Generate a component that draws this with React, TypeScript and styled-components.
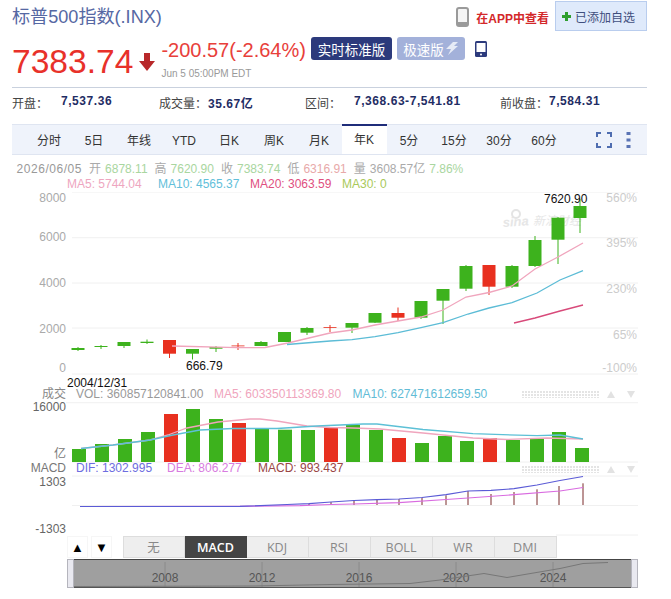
import styled, { createGlobalStyle } from "styled-components";

const GlobalStyle = createGlobalStyle`
  body {
    margin: 0;
    background: #fff;
    font-family: "Liberation Sans", "Noto Sans CJK SC", sans-serif;
  }
`;

const Page = styled.div`
  width: 671px;
  height: 599px;
  overflow: hidden;
  background: #fff;
`;

const TitleRow = styled.div`
  display: flex;
  align-items: flex-start;
  height: 36px;
  padding-left: 12px;
  width: 635px;
`;

const Title = styled.div`
  font-size: 18.1px;
  line-height: 22px;
  margin-top: 6px;
  color: #5668a3;
  flex: 1;
`;

const AppLink = styled.div`
  display: flex;
  align-items: center;
  gap: 7px;
  height: 20px;
  margin-top: 7px;
  margin-right: 6px;
  font-size: 12px;
  font-weight: bold;
  color: #d3282a;
`;

const WatchButton = styled.div`
  display: flex;
  align-items: center;
  gap: 4px;
  box-sizing: border-box;
  width: 92px;
  height: 30px;
  margin-top: 1px;
  padding-left: 6px;
  background: #dfeafb;
  border: 1px solid #b9cdee;
  font-size: 12px;
  color: #3f4f7e;
`;

const QuoteRow = styled.div`
  display: flex;
  height: 51px;
  padding-left: 12px;
  width: 635px;
  box-sizing: content-box;
`;

const Price = styled.div`
  font-size: 33.6px;
  line-height: 52px;
  color: #e8312a;
`;

const DownArrow = styled.svg`
  width: 18px;
  height: 18px;
  margin: 17px 5px 0 5px;
`;

const ChangeBlock = styled.div`
  display: flex;
  flex-direction: column;
`;

const Change = styled.div`
  font-size: 20px;
  line-height: 26px;
  margin-top: 1px;
  color: #e8403a;
  white-space: nowrap;
`;

const Stamp = styled.div`
  font-size: 10px;
  line-height: 12px;
  margin-top: 5px;
  color: #999;
  white-space: nowrap;
`;

const Badge = styled.div<{ $w: number; $bg: string }>`
  display: flex;
  align-items: center;
  justify-content: center;
  gap: 1px;
  box-sizing: border-box;
  width: ${(p) => p.$w}px;
  height: 23px;
  margin: 1px 0 0 5px;
  background: ${(p) => p.$bg};
  border-radius: 3px;
  font-size: 13.5px;
  color: #fff;
`;

const DeviceLink = styled.div`
  margin: 5px 0 0 10px;
`;

const StatsRow = styled.div`
  display: flex;
  align-items: center;
  margin-left: 12px;
  width: 635px;
  height: 28px;
  border-top: 1px solid #c9d1de;
  font-size: 12px;
`;

const Stat = styled.div<{ $w: number }>`
  display: flex;
  width: ${(p) => p.$w}px;
  color: #444;
`;

const StatLabel = styled.span`
  width: 49px;
`;

const StatValue = styled.span`
  font-weight: bold;
  color: #1f2d64;
  letter-spacing: 0.55px;
`;

const TabBar = styled.div`
  display: flex;
  box-sizing: border-box;
  margin: 8px 0 0 12px;
  padding-left: 14.5px;
  width: 635px;
  height: 31px;
  background: #eff3fb;
  border-top: 1px solid #dfe5f1;
  border-bottom: 1px solid #dfe5f1;
`;

const Tab = styled.div<{ $active?: boolean }>`
  box-sizing: border-box;
  width: 45px;
  height: 30px;
  margin-top: -1px;
  text-align: center;
  font-size: 12px;
  line-height: 31px;
  color: #333;
  background: ${(p) => (p.$active ? "#fff" : "transparent")};
  border-top: 2px solid ${(p) => (p.$active ? "#1f2d7a" : "transparent")};
  ${(p) => (p.$active ? "line-height: 29px;" : "")}
`;

const TabTools = styled.div`
  display: flex;
  align-items: center;
  gap: 14px;
  margin-left: 29px;
`;

const LegendRow = styled.div<{ $left: number; $top: number }>`
  display: flex;
  height: 15px;
  line-height: 15px;
  font-size: 12px;
  white-space: nowrap;
  margin: ${(p) => p.$top}px 0 0 ${(p) => p.$left}px;
`;

const Pair = styled.span`
  display: inline-flex;
  gap: 4px;
  margin-right: 7px;
`;

const Ink = styled.span<{ $c: string; $ls?: number }>`
  color: ${(p) => p.$c};
  letter-spacing: ${(p) => p.$ls ?? 0}px;
`;

const MaItem = styled.span<{ $c: string; $w: number }>`
  color: ${(p) => p.$c};
  width: ${(p) => p.$w}px;
`;

const ChartSvg = styled.svg`
  display: block;
  width: 671px;
  height: 344px;
  font-family: "Liberation Sans", "Noto Sans CJK SC", sans-serif;
  font-size: 12px;
`;

const IndicatorRow = styled.div`
  display: flex;
  height: 22px;
  margin-left: 67px;
`;

const ArrowButton = styled.div`
  display: flex;
  align-items: center;
  justify-content: center;
  width: 21px;
  margin-right: 3px;
  font-size: 13px;
  color: #000;
  background: #fff;
  border: 1px solid #f6f6f6;
  box-sizing: border-box;
`;

const IndicatorTabs = styled.div`
  display: flex;
  margin-left: 7.5px;
`;

const IndicatorTab = styled.div<{ $active?: boolean }>`
  box-sizing: border-box;
  width: 62px;
  height: 22px;
  line-height: 22px;
  text-align: center;
  font-family: "Open Sans", "Noto Sans CJK SC", sans-serif;
  font-size: 12.5px;
  font-weight: ${(p) => (p.$active ? 600 : 400)};
  color: ${(p) => (p.$active ? "#fff" : "#888")};
  background: ${(p) => (p.$active ? "#444" : "#eee")};
  border: 1px solid ${(p) => (p.$active ? "#444" : "#ddd")};
  border-left-width: ${(p) => (p.$active ? 1 : 0)}px;
  &:first-child {
    border-left-width: 1px;
  }
`;

const Navigator = styled.div`
  display: flex;
  box-sizing: border-box;
  width: 571px;
  height: 29px;
  margin: 1px 0 0 67px;
  background: #9f9f9f;
  border-top: 1px solid #444;
  border-bottom: 1px solid #555;
`;

const NavHandle = styled.div`
  box-sizing: border-box;
  width: 7px;
  margin: -1px 0;
  background: #e9e9f0;
  border: 1px solid #b5b5bd;
`;

const NavTrack = styled.svg`
  flex: 1;
  height: 27px;
  font-family: "Liberation Sans", sans-serif;
  font-size: 12px;
`;

type Candle = [number, number, number, number, number, "g" | "r"];

const candles: Candle[] = [
  [78, 346, 350, 347, 349, "g"],
  [101, 344, 348, 345, 346, "g"],
  [124, 341, 347, 341, 345, "g"],
  [147, 338.5, 343, 340.7, 342, "g"],
  [169.5, 339, 357, 339, 352.7, "r"],
  [192.5, 348, 358.5, 348, 352.7, "g"],
  [216, 345, 351, 346, 347.7, "g"],
  [238, 342, 349, 344.5, 345.2, "r"],
  [261, 340, 345, 341, 345, "g"],
  [284.5, 331, 341, 331, 341, "g"],
  [307, 326, 334, 327, 331.7, "g"],
  [330, 324, 331, 326, 326.8, "r"],
  [352, 322, 332, 322, 326.7, "g"],
  [375, 312, 322, 312, 321.7, "g"],
  [398, 306.5, 320, 312, 316.7, "r"],
  [421, 300, 318, 300, 316.7, "g"],
  [443, 288, 323, 288, 299.7, "g"],
  [466, 264, 290, 265, 287.7, "g"],
  [489, 264, 294, 264, 285.7, "r"],
  [512, 264, 287, 265, 285.7, "g"],
  [535, 235, 266, 239, 265, "g"],
  [558, 216, 263, 216.7, 238.7, "g"],
  [580, 198, 232, 205, 217, "g"],
];

const volumes: [number, number, "g" | "r"][] = [
  [79, 448, "g"], [102, 443, "g"], [125, 438, "g"], [148, 431, "g"],
  [171, 413, "r"], [193, 408, "g"], [216, 418, "g"], [239, 422, "r"],
  [262, 427.3, "g"], [285, 428.7, "g"], [308, 429, "g"], [331, 427, "r"],
  [353, 424, "g"], [376, 429, "g"], [399, 437, "r"], [422, 442, "g"],
  [445, 435, "g"], [467, 440, "g"], [490, 437, "r"], [513, 439, "g"],
  [537, 437, "g"], [559, 431, "g"], [582, 447, "g"],
];

const macdBars: [number, number][] = [
  [309, 502.5], [331, 501], [354, 500], [377, 498.7], [399, 498], [422, 496.7],
  [446, 494.3], [468, 490], [491, 493], [514, 491], [537, 488.3], [559, 485], [583, 482.3],
];

const ma5 = "172,345 238,346.7 265,346.5 288,342 330,332 352,329 375,324 398,320 421,316 443,309 466,296 489,291.5 512,285 535,268 558,256 583,242";
const ma10 = "287,343.5 330,340 352,338.7 375,335.7 398,331.7 421,326.7 443,321.7 468,313 489,307 512,301.7 537,292 560,279 583,269.7";
const ma20 = "514,322 535,317 560,310 583,304";
const volMa5 = "81,447.5 113,444 150,439 168,434 187,427 218,421 250,418 260,418 277,420 307,425 330,426.5 353,427 380,428 423,432 473,437 507,438.5 547,437 583,438";
const volMa10 = "81,447.5 113,444 150,439 173,434 200,429 233,427.5 277,427.5 317,425 340,424 363,423 377,423 423,428.5 473,432.7 537,434.7 560,434 583,438";
const dif = "80,505.5 240,505.4 287,503.5 309,502.7 331,501 354,499.5 377,498.7 399,498 422,496.5 446,493.7 468,490 491,489.3 514,487.7 537,484 560,479.5 583,475.5";
const dea = "80,505.5 240,505.4 300,504.6 331,503.5 354,503 399,501.7 446,498.5 468,497 514,493.7 560,490 583,486.5";

const GREEN = "#3db21d";
const RED = "#e8301f";

const leftAxis: [string, number, string][] = [
  ["8000", 197, "#aaa"], ["6000", 236, "#aaa"], ["4000", 282, "#aaa"], ["2000", 328, "#aaa"],
  ["0", 367, "#aaa"], ["成交", 393, "#888"], ["16000", 406, "#666"], ["亿", 453, "#777"],
  ["MACD", 467, "#777"], ["1303", 481, "#666"], ["-1303", 528, "#666"],
];

const rightAxis: [string, number][] = [
  ["560%", 197], ["395%", 241.5], ["230%", 288], ["65%", 334], ["-100%", 367],
];

const grid: [number, number, number][] = [
  [72, 638, 191], [72, 638, 236.7], [72, 638, 282], [72, 638, 327], [72, 638, 373],
  [66, 638, 401.7], [72, 638, 461], [72, 638, 475], [72, 638, 504.5], [556, 638, 534],
];

const PaneTools = ({ y }: { y: number }) => (
  <>
    <rect x="521" y={y - 3} width="78" height="7" fill="url(#dots)" />
    <polygon points={`607,${y + 4} 615,${y + 4} 611,${y - 3}`} fill="#e2e2e2" />
    <polygon points={`627,${y - 3} 635,${y - 3} 631,${y + 4}`} fill="#e2e2e2" />
  </>
);

const Chart = () => (
  <ChartSvg viewBox="0 191 671 344">
    <defs>
      <pattern id="dots" width="3" height="3" patternUnits="userSpaceOnUse">
        <rect width="2" height="2" fill="#e4e4e4" />
      </pattern>
    </defs>
    {grid.map(([a, b, y]) => (
      <line key={`${a}-${y}`} x1={a} x2={b} y1={y} y2={y} stroke="#f0f0f0" />
    ))}
    {leftAxis.map(([t, y, c]) => (
      <text key={t} x="66" y={y} textAnchor="end" dominantBaseline="central" fill={c}>{t}</text>
    ))}
    {rightAxis.map(([t, y]) => (
      <text key={t} x="637" y={y} textAnchor="end" dominantBaseline="central" fill="#ccc">{t}</text>
    ))}

    {/* watermark */}
    <g fill="#e4e4e4" opacity="0.9">
      <circle cx="516" cy="213" r="4" fill="none" stroke="#e2e2e2" strokeWidth="2" />
      <text x="503" y="226" fontSize="13" fontStyle="italic" fontWeight="bold" transform="rotate(-4 503 226)">sina</text>
      <text x="533" y="224" fontSize="12" fontStyle="italic">新浪财经</text>
    </g>

    {candles.map(([x, hi, lo, top, bottom, dir]) => {
      const c = dir === "g" ? GREEN : RED;
      return (
        <g key={x}>
          <line x1={x} x2={x} y1={hi} y2={lo} stroke={c} />
          <rect x={x - 6.5} y={top} width="13" height={Math.max(bottom - top, 0.8)} fill={c} />
        </g>
      );
    })}
    <polyline points={ma5} fill="none" stroke="#f0a5bd" strokeWidth="1.3" />
    <polyline points={ma10} fill="none" stroke="#5cbcd6" strokeWidth="1.3" />
    <polyline points={ma20} fill="none" stroke="#d84a7a" strokeWidth="1.3" />
    <text x="544" y="198" dominantBaseline="central" fill="#111">7620.90</text>
    <text x="186" y="365" dominantBaseline="central" fill="#111">666.79</text>
    <text x="67" y="381.5" dominantBaseline="central" fill="#111">2004/12/31</text>

    <text x="76" y="393" dominantBaseline="central" fill="#999">VOL: 360857120841.00</text>
    <text x="214" y="393" dominantBaseline="central" fill="#f0a5bd">MA5: 603350113369.80</text>
    <text x="352.5" y="393" dominantBaseline="central" fill="#62bcd6">MA10: 627471612659.50</text>
    <PaneTools y={393} />

    {volumes.map(([x, top, dir]) => (
      <rect key={x} x={x - 7} y={top} width="14" height={461 - top} fill={dir === "g" ? GREEN : RED} />
    ))}
    <polyline points={volMa5} fill="none" stroke="#f0a5bd" strokeWidth="1.3" />
    <polyline points={volMa10} fill="none" stroke="#5cc0d6" strokeWidth="1.3" />

    <text x="76" y="467" dominantBaseline="central" fill="#6d6de0">DIF: 1302.995</text>
    <text x="167" y="467" dominantBaseline="central" fill="#d87be0">DEA: 806.277</text>
    <text x="258" y="467" dominantBaseline="central" fill="#9a4545">MACD: 993.437</text>
    <PaneTools y={468} />

    {macdBars.map(([x, top]) => (
      <line key={x} x1={x} x2={x} y1={top} y2={504} stroke="#7a2b2b" />
    ))}
    <polyline points={dea} fill="none" stroke="#d96be0" strokeWidth="1.2" />
    <polyline points={dif} fill="none" stroke="#5b5bd6" strokeWidth="1.2" />
  </ChartSvg>
);

const Phone = ({ outline }: { outline: boolean }) =>
  outline ? (
    <svg width="13" height="20" viewBox="0 0 13 20">
      <rect x="1" y="1" width="11" height="18" rx="2" fill="#f4f4f4" stroke="#9a9a9a" strokeWidth="2" />
      <rect x="1" y="15" width="11" height="4" fill="#9a9a9a" />
    </svg>
  ) : (
    <svg width="12" height="16" viewBox="0 0 12 16">
      <rect width="12" height="16" rx="1.5" fill="#2c3a7c" />
      <rect x="1.5" y="2" width="9" height="9" fill="#fff" />
      <circle cx="6" cy="13.4" r="1" fill="#fff" />
    </svg>
  );

const stats: [number, string, string][] = [
  [147, "开盘：", "7,537.36"],
  [146, "成交量：", "35.67亿"],
  [195, "区间：", "7,368.63-7,541.81"],
  [147, "前收盘：", "7,584.31"],
];

const tabs = ["分时", "5日", "年线", "YTD", "日K", "周K", "月K", "年K", "5分", "15分", "30分", "60分"];
const indicators = ["无", "MACD", "KDJ", "RSI", "BOLL", "WR", "DMI"];
const years: [string, number][] = [["2008", 91], ["2012", 188], ["2016", 285], ["2020", 382], ["2024", 479]];

const App = () => (
  <Page>
    <GlobalStyle />
    <TitleRow>
      <Title>标普500指数(.INX)</Title>
      <AppLink>
        <Phone outline />
        在APP中查看
      </AppLink>
      <WatchButton>
        <svg width="9" height="9" viewBox="0 0 9 9">
          <path d="M3 0h3v3h3v3H6v3H3V6H0V3h3z" fill="#2f9e2f" />
        </svg>
        已添加自选
      </WatchButton>
    </TitleRow>

    <QuoteRow>
      <Price>7383.74</Price>
      <DownArrow viewBox="0 0 18 18">
        <path d="M6 0h6v8h5l-8 10L1 8h5z" fill="#b8282a" />
      </DownArrow>
      <ChangeBlock>
        <Change>-200.57(-2.64%)</Change>
        <Stamp>Jun 5 05:00PM EDT</Stamp>
      </ChangeBlock>
      <Badge $w={81} $bg="#2c3a7c">实时标准版</Badge>
      <Badge $w={68} $bg="#a3b1da">
        极速版
        <svg width="14" height="13" viewBox="0 0 14 13">
          <path d="M8 0h5L9 4h4L3 13l3-6H1z" fill="#e6ebf6" />
        </svg>
      </Badge>
      <DeviceLink>
        <Phone outline={false} />
      </DeviceLink>
    </QuoteRow>

    <StatsRow>
      {stats.map(([w, label, value]) => (
        <Stat key={label} $w={w}>
          <StatLabel>{label}</StatLabel>
          <StatValue>{value}</StatValue>
        </Stat>
      ))}
    </StatsRow>

    <TabBar>
      {tabs.map((t) => (
        <Tab key={t} $active={t === "年K"}>{t}</Tab>
      ))}
      <TabTools>
        <svg width="16" height="16" viewBox="0 0 16 16" fill="none" stroke="#4f6db0" strokeWidth="2">
          <path d="M1 5V1h4M11 1h4v4M15 11v4h-4M5 15H1v-4" />
        </svg>
        <svg width="5" height="16" viewBox="0 0 5 16" fill="#5a74b5">
          <rect x="0.5" width="4" height="3" />
          <rect x="0.5" y="6.5" width="4" height="3" />
          <rect x="0.5" y="13" width="4" height="3" />
        </svg>
      </TabTools>
    </TabBar>

    <LegendRow $left={16.5} $top={7}>
      <Pair>
        <Ink $c="#999" $ls={0.55}>2026/06/05</Ink>
      </Pair>
      <Pair><Ink $c="#aaa">开</Ink><Ink $c="#a9d6a0">6878.11</Ink></Pair>
      <Pair><Ink $c="#aaa">高</Ink><Ink $c="#a9d6a0">7620.90</Ink></Pair>
      <Pair><Ink $c="#aaa">收</Ink><Ink $c="#a9d6a0">7383.74</Ink></Pair>
      <Pair><Ink $c="#aaa">低</Ink><Ink $c="#e8a9a9">6316.91</Ink></Pair>
      <Pair><Ink $c="#aaa">量</Ink><Ink $c="#aaa">3608.57亿</Ink><Ink $c="#a9d6a0">7.86%</Ink></Pair>
    </LegendRow>
    <LegendRow $left={67} $top={0}>
      <MaItem $c="#eea6bf" $w={91}>MA5: 5744.04</MaItem>
      <MaItem $c="#62c0da" $w={92}>MA10: 4565.37</MaItem>
      <MaItem $c="#e0507f" $w={92}>MA20: 3063.59</MaItem>
      <MaItem $c="#a9c95a" $w={60}>MA30: 0</MaItem>
    </LegendRow>

    <Chart />

    <IndicatorRow>
      <ArrowButton>▲</ArrowButton>
      <ArrowButton>▼</ArrowButton>
      <IndicatorTabs>
        {indicators.map((t) => (
          <IndicatorTab key={t} $active={t === "MACD"}>{t}</IndicatorTab>
        ))}
      </IndicatorTabs>
    </IndicatorRow>

    <Navigator>
      <NavHandle />
      <NavTrack viewBox="0 0 557 27">
        {years.map(([y, x]) => (
          <g key={y}>
            <line x1={x} x2={x} y1="2" y2="27" stroke="#8a8a8a" />
            <text x={x} y="18" textAnchor="middle" dominantBaseline="central" fill="#555">{y}</text>
          </g>
        ))}
        <polyline
          points="0,26.5 180,26 256,24.5 336,23.5 366,20 410,13.5 433,17.5 486,8.5 509,3.5 534,2.5"
          fill="none"
          stroke="#777"
        />
      </NavTrack>
      <NavHandle />
    </Navigator>
  </Page>
);

export default App;
